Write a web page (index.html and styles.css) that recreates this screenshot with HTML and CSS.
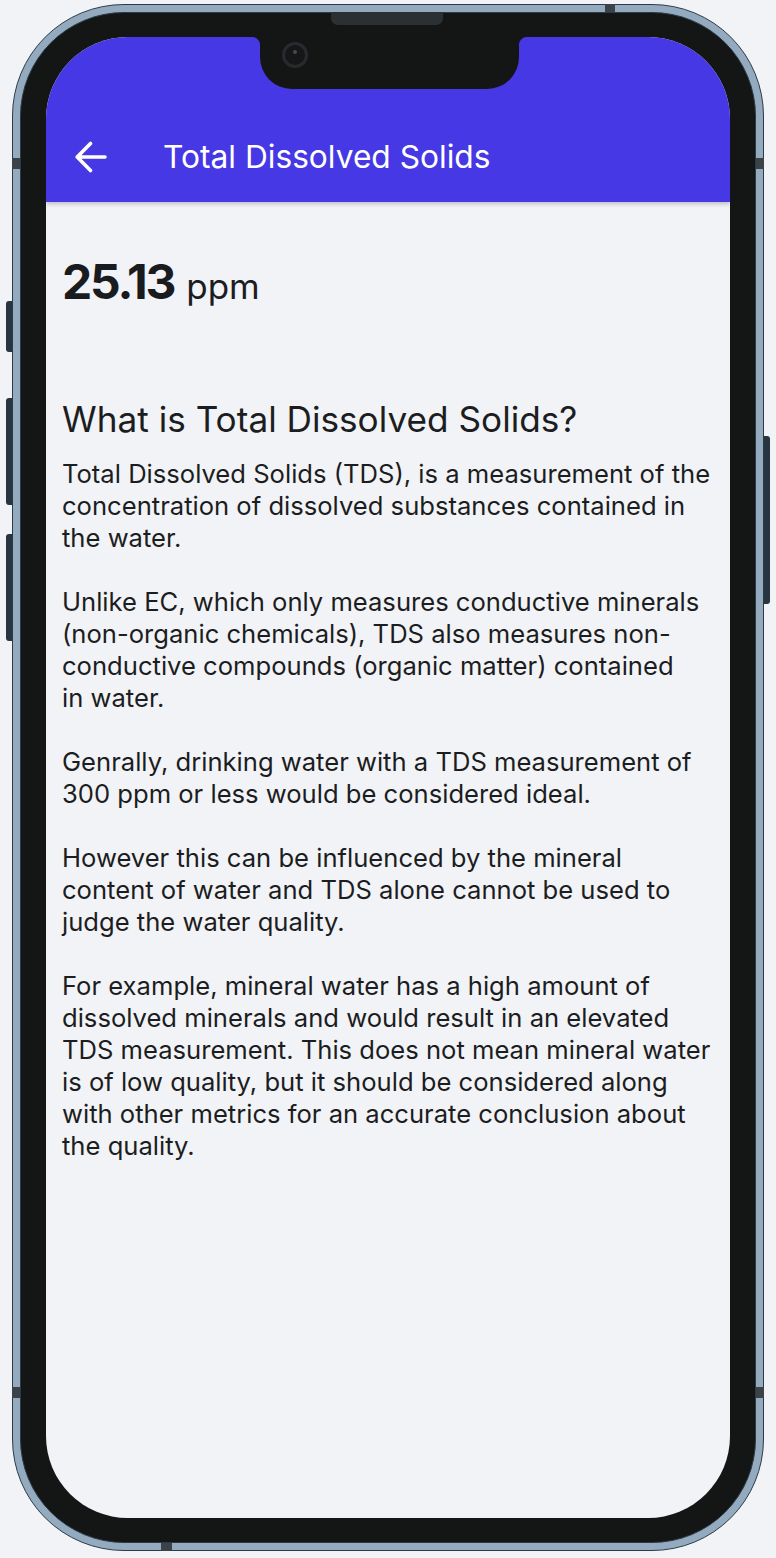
FILE: index.html
```html
<!DOCTYPE html>
<html lang="en">
<head>
<meta charset="utf-8">
<title>Total Dissolved Solids</title>
<link rel="stylesheet" href="styles.css">
</head>
<body>
<div class="stage">
  <div class="phone">
    <span class="side-btn btn-l1"></span>
    <span class="side-btn btn-l2"></span>
    <span class="side-btn btn-l3"></span>
    <span class="side-btn btn-r1"></span>
    <span class="mark mark-top"></span>
    <span class="mark mark-left-top"></span>
    <span class="mark mark-right-top"></span>
    <span class="mark mark-left-bottom"></span>
    <span class="mark mark-right-bottom"></span>
    <span class="mark mark-bottom"></span>
    <div class="bezel">
      <span class="speaker"></span>
      <div class="screen">
        <div class="notch"><span class="camera"></span></div>
        <header class="appbar">
          <div class="toolbar">
            <svg class="back" width="32" height="32" viewBox="0 0 32 32" aria-label="Back">
              <path d="M2.2 16H30M15.5 2.5L2.2 16L15.5 29.5" fill="none" stroke="#ffffff" stroke-width="3.6" stroke-linecap="round" stroke-linejoin="round"/>
            </svg>
            <h1 class="title">Total Dissolved Solids</h1>
          </div>
        </header>
        <main class="content">
          <div class="reading"><span class="value">25.13</span><span class="unit">ppm</span></div>
          <h2 class="heading">What is Total Dissolved Solids?</h2>
          <p>Total Dissolved Solids (TDS), is a measurement of the concentration of dissolved substances contained in the water.</p>
          <p>Unlike EC, which only measures conductive minerals (non-organic chemicals), TDS also measures non-conductive compounds (organic matter) contained in&nbsp;water.</p>
          <p>Genrally, drinking water with a TDS measurement of 300 ppm or less would be considered ideal.</p>
          <p>However this can be influenced by the mineral content of water and TDS alone cannot be used to judge the water quality.</p>
          <p>For example, mineral water has a high amount of dissolved minerals and would result in an elevated TDS measurement. This does not mean mineral water is of low quality, but it should be considered along with other metrics for an accurate conclusion about the quality.</p>
        </main>
      </div>
    </div>
  </div>
</div>
</body>
</html>
```
FILE: styles.css
```css
* { box-sizing: border-box; }

html, body {
  margin: 0;
  padding: 0;
  background: #f2f3f7;
}

body {
  font-family: Inter, "Noto Sans", sans-serif;
  color: #1c1d21;
}

.stage {
  width: 776px;
  height: 1558px;
  padding: 4px 0 0 12px;
}

.phone {
  position: relative;
  width: 752px;
  height: 1547px;
  padding: 7px;
  border: 1px solid #2b3b48;
  border-radius: 112px;
  background: #94abbf;
}

.bezel {
  position: relative;
  width: 736px;
  height: 1531px;
  padding: 24px 25px;
  border: 1px solid #2b3b48;
  border-radius: 104px;
  background: #141615;
}

.screen {
  position: relative;
  width: 684px;
  height: 1481px;
  border-radius: 82px;
  overflow: hidden;
  background: #f2f3f7;
}

/* hardware decorations */
.side-btn {
  position: absolute;
  background: #263540;
}
.btn-l1, .btn-l2, .btn-l3 {
  left: -7px;
  width: 6px;
  border-radius: 3px 0 0 3px;
}
.btn-l1 { top: 296px; height: 51px; }
.btn-l2 { top: 393px; height: 107px; }
.btn-l3 { top: 529px; height: 107px; }
.btn-r1 {
  right: -7px;
  top: 431px;
  width: 6px;
  height: 168px;
  border-radius: 0 3px 3px 0;
}

.mark {
  position: absolute;
  background: #3b4349;
}
.mark-top { top: -1px; left: 592px; width: 10px; height: 8px; }
.mark-left-top { left: -1px; top: 153px; width: 8px; height: 11px; }
.mark-right-top { right: -1px; top: 153px; width: 8px; height: 11px; }
.mark-left-bottom { left: -1px; top: 1382px; width: 8px; height: 11px; }
.mark-right-bottom { right: -1px; top: 1382px; width: 8px; height: 11px; }
.mark-bottom { bottom: -1px; left: 148px; width: 11px; height: 8px; }

.speaker {
  position: absolute;
  top: -1px;
  left: 310px;
  width: 112px;
  height: 13px;
  border-radius: 0 0 7px 7px;
  background: #2b3133;
}

.notch {
  position: absolute;
  z-index: 3;
  top: 0;
  left: 214px;
  width: 259px;
  height: 52px;
  border-radius: 0 0 32px 32px;
  background: #141615;
}
.notch::before,
.notch::after {
  content: "";
  position: absolute;
  top: 0;
  width: 8px;
  height: 8px;
}
.notch::before {
  left: -8px;
  background: radial-gradient(circle at 0 100%, transparent 7.5px, #141615 8.5px);
}
.notch::after {
  right: -8px;
  background: radial-gradient(circle at 100% 100%, transparent 7.5px, #141615 8.5px);
}

.camera {
  position: absolute;
  left: 22px;
  top: 5px;
  width: 26px;
  height: 26px;
  border-radius: 50%;
  border: 3px solid #272b2d;
  background: #151718;
}
.camera::after {
  content: "";
  position: absolute;
  left: 8px;
  top: 5px;
  width: 4px;
  height: 4px;
  border-radius: 50%;
  background: #474b4e;
}

/* app bar */
.appbar {
  position: relative;
  z-index: 2;
  height: 165px;
  padding-top: 76px;
  background: #4638e4;
  box-shadow: 0 2px 4px rgba(0, 0, 0, 0.22);
}

.toolbar {
  display: flex;
  align-items: center;
  height: 88px;
  padding-left: 29px;
}

.back {
  display: block;
  flex: none;
}

.title {
  margin: 0 0 0 56px;
  font-size: 31.7px;
  font-weight: 400;
  line-height: 40px;
  color: #ffffff;
  letter-spacing: 0;
}

/* content */
.content {
  padding: 51px 16px 0;
}

.reading {
  display: flex;
  align-items: baseline;
  line-height: 58px;
}

.value {
  font-size: 48px;
  font-weight: 700;
  letter-spacing: -2.2px;
  color: #1a1b1f;
}

.unit {
  margin-left: 12px;
  font-size: 35px;
  font-weight: 400;
  color: #1c1d21;
}

.heading {
  margin: 82px 0 17px;
  font-size: 35.2px;
  font-weight: 400;
  line-height: 44px;
}

.content p {
  width: 656px;
  margin: 0 0 32px;
  font-size: 25.6px;
  line-height: 32px;
}
```
